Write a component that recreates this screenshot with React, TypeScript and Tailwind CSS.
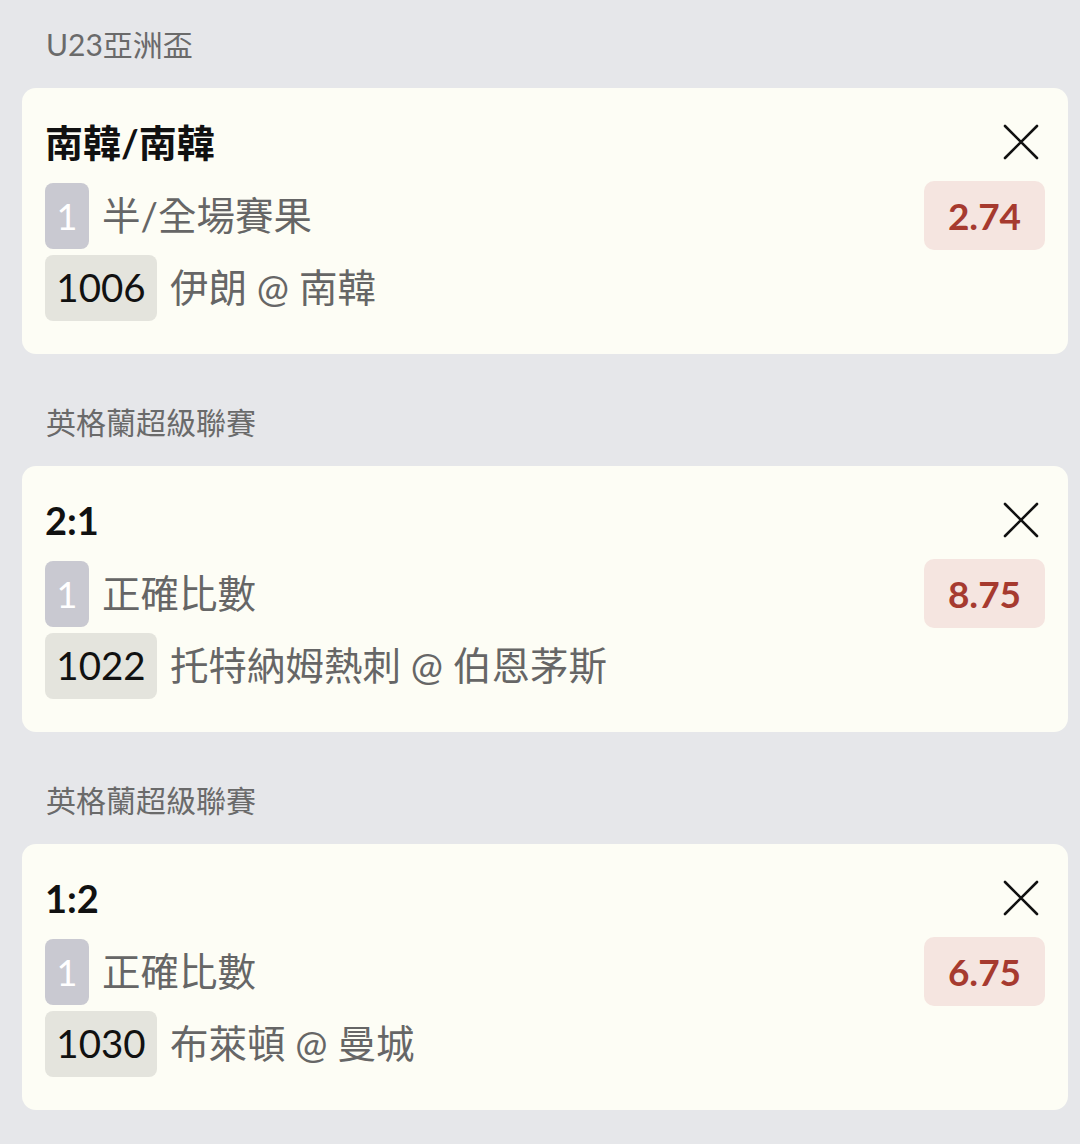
import React from 'react';

interface Bet {
  league: string;
  title: string;
  leg: string;
  market: string;
  matchNo: string;
  match: string;
  odds: string;
}

const bets: Bet[] = [
  { league: 'U23亞洲盃', title: '南韓/南韓', leg: '1', market: '半/全場賽果', matchNo: '1006', match: '伊朗 @ 南韓', odds: '2.74' },
  { league: '英格蘭超級聯賽', title: '2:1', leg: '1', market: '正確比數', matchNo: '1022', match: '托特納姆熱刺 @ 伯恩茅斯', odds: '8.75' },
  { league: '英格蘭超級聯賽', title: '1:2', leg: '1', market: '正確比數', matchNo: '1030', match: '布萊頓 @ 曼城', odds: '6.75' },
];

const font = { fontFamily: 'Lato, "Noto Sans CJK TC", sans-serif' };

const CloseIcon = () => (
  <svg width="36" height="36" viewBox="0 0 36 36" fill="none" stroke="#111" strokeWidth="2.6" strokeLinecap="round">
    <path d="M2 2L34 34M34 2L2 34" />
  </svg>
);

const BetCard: React.FC<{ bet: Bet }> = ({ bet }) => (
  <div className="ml-[22px] mr-[12px] rounded-[14px] bg-[#fdfdf5] pl-[23px] pr-[23px] pt-[30px] pb-[33px]">
    <div className="flex h-[48px] items-center justify-between">
      <span className="text-[38px] font-bold leading-none text-[#111]">{bet.title}</span>
      <span className="mr-[6px]">
        <CloseIcon />
      </span>
    </div>
    <div className="mt-[15px] flex h-[69px] items-center justify-between">
      <div className="flex items-center">
        <span className="flex h-[66px] w-[44px] items-center justify-center rounded-[8px] bg-[#c9c9d1] text-[36px] font-normal text-white">
          {bet.leg}
        </span>
        <span className="ml-[13px] text-[38.5px] text-[#666]">{bet.market}</span>
      </div>
      <span className="flex h-[69px] w-[121px] items-center justify-center rounded-[10px] bg-[#f5e5e0] text-[37px] font-bold text-[#a63a2f]">
        {bet.odds}
      </span>
    </div>
    <div className="mt-[5px] flex h-[66px] items-center">
      <span className="flex h-[66px] w-[112px] items-center justify-center rounded-[8px] bg-[#e4e4dd] text-[38.5px] text-[#111]">
        {bet.matchNo}
      </span>
      <span className="ml-[13px] text-[38.5px] text-[#666]">{bet.match}</span>
    </div>
  </div>
);

export default function App() {
  return (
    <div className="min-h-[1144px] w-[1080px] bg-[#e6e7ea] pt-[24px]" style={font}>
      <div className="flex flex-col gap-[48px]">
        {bets.map((bet, i) => (
          <div key={i}>
            <div className="mb-[24px] flex h-[40px] items-center pl-[46px] text-[30px] text-[#6a6a6a]">{bet.league}</div>
            <BetCard bet={bet} />
          </div>
        ))}
      </div>
    </div>
  );
}
